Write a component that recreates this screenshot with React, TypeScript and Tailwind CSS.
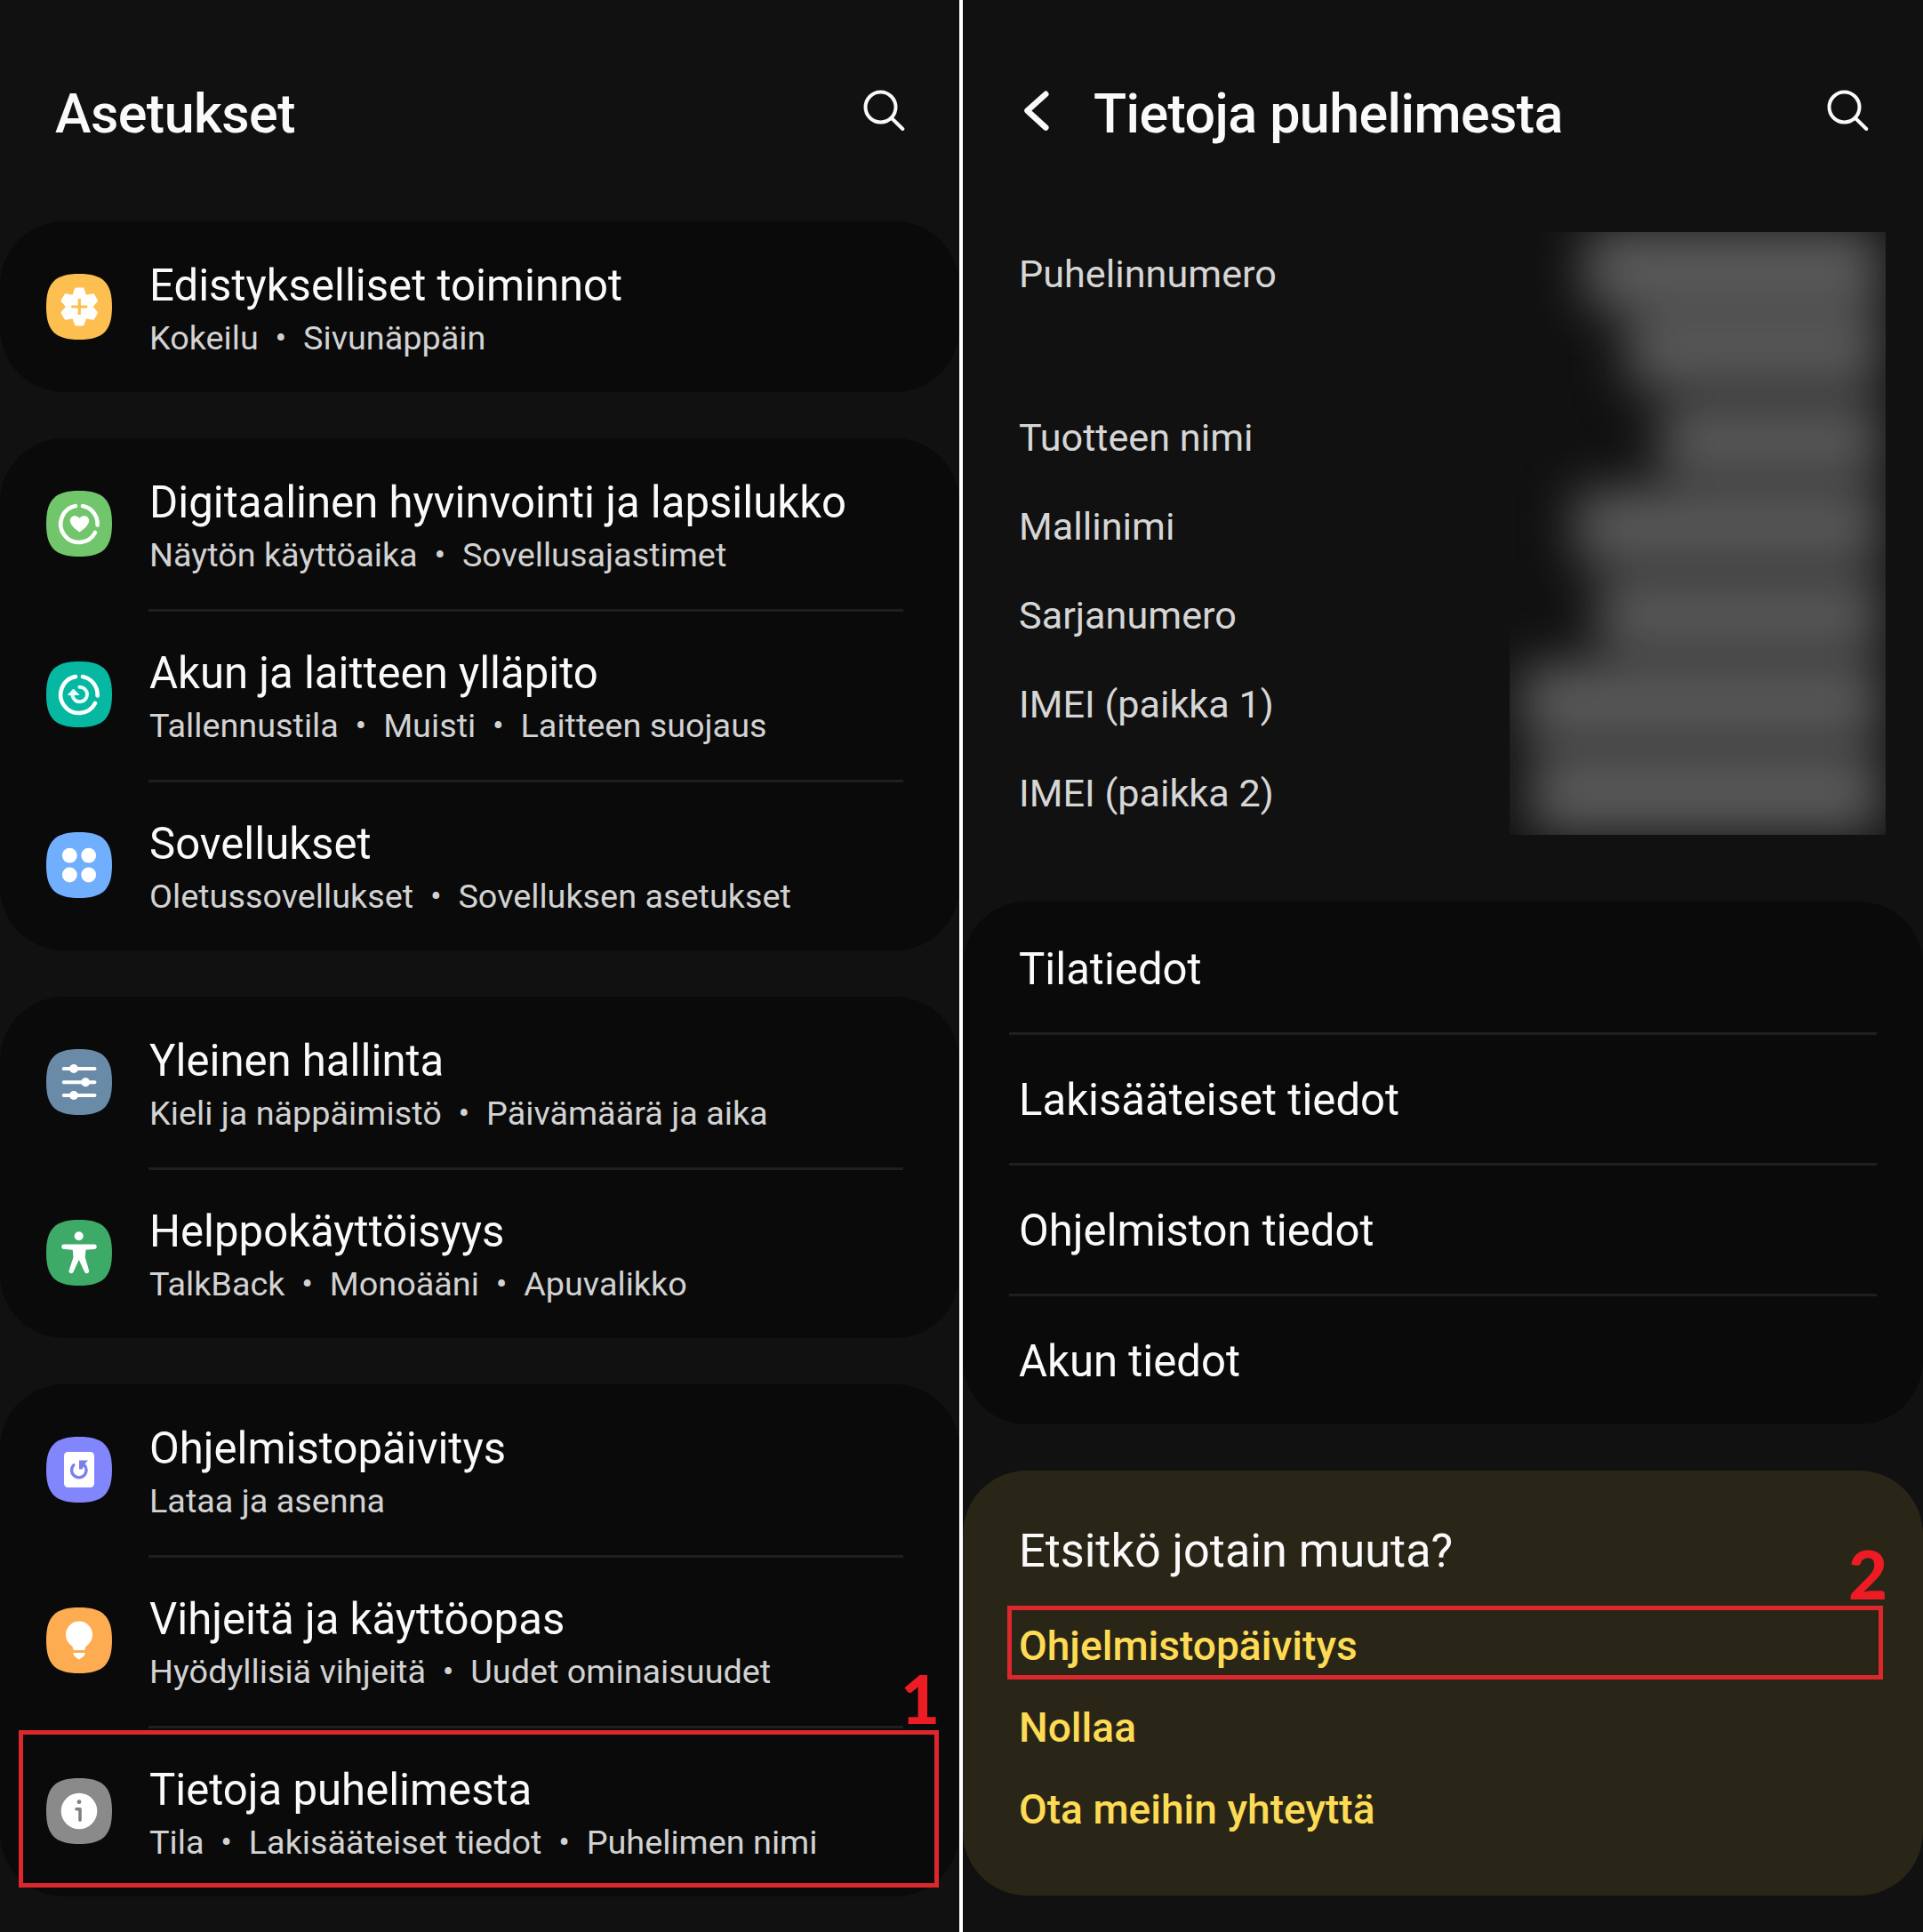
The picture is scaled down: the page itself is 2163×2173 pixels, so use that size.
import type { ReactNode } from 'react';

type Row = { title: string; parts: string[]; color: string; icon: ReactNode };

const gear = (
  <g>
    <g fill="#fff" stroke="#fff" strokeWidth="3" strokeLinejoin="round">
      <circle cx="37.300" cy="37" r="13.500" />
      {[0, 60, 120, 180, 240, 300].map((angle) => (
        <path key={angle} d="M30 27L33.500 17H41.100L44.600 27z" transform={`rotate(${angle} 37.300 37)`} />
      ))}
    </g>
    <path d="M37.300 28v18M28.300 37h18" stroke="#fdbf50" strokeWidth="3.200" />
  </g>
);

const brokenRing = (
  <path
    d="M33 17.100A20.600 20.600 0 1 0 55 47M41 17.100A20.600 20.600 0 0 1 57.600 38.500"
    fill="none"
    stroke="#fff"
    strokeWidth="4.600"
    strokeLinecap="round"
  />
);

const heart = (
  <g>
    {brokenRing}
    <path
      d="M37.500 46.500C34 44 26.800 39 26.800 33.500c0-5.500 7.200-7.300 10.700-2.700 3.500-4.600 10.700-2.800 10.700 2.700 0 5.500-7.200 10.500-10.700 13z"
      fill="#fff"
    />
  </g>
);

const care = (
  <g>
    {brokenRing}
    <path
      d="M37.500 28.700a8.300 8.300 0 1 1-8 9.500"
      fill="none"
      stroke="#e8fffa"
      strokeWidth="4"
      strokeLinecap="round"
    />
    <path d="M24.500 37.500l6-6.500 6.500 6.500z" fill="#e8fffa" stroke="#e8fffa" strokeLinejoin="round" />
  </g>
);

const apps = (
  <g fill="#fff">
    <circle cx="26.300" cy="26.200" r="8.400" />
    <circle cx="47.700" cy="26.200" r="8.400" />
    <circle cx="26.300" cy="48" r="8.400" />
    <circle cx="47.700" cy="48" r="8.400" />
  </g>
);

const sliders = (
  <g fill="#fff" stroke="#fff" strokeWidth="4" strokeLinecap="round">
    <path d="M19.700 22h34.800M19.700 37.200h34.800M19.700 52h34.800" />
    <g stroke="none">
      <circle cx="31" cy="22" r="5" />
      <circle cx="44.200" cy="37.200" r="5" />
      <circle cx="31" cy="52" r="5" />
    </g>
  </g>
);

const person = (
  <g fill="#fff">
    <circle cx="36.700" cy="18.300" r="5" />
    <path d="M20 27.500h34a2.700 2.700 0 0 1 0 5.400l-9.500.8-.8 8.300 4.300 14.700a2.600 2.600 0 0 1-4.900 1.800L36.800 45l-6.200 13.500a2.600 2.600 0 0 1-4.900-1.800L30.500 42l-.8-8.300-9.700-.8a2.700 2.700 0 0 1 0-5.400z" />
  </g>
);

const update = (
  <g>
    <rect x="20" y="17" width="34" height="40" rx="4.500" fill="#fff" />
    <path
      d="M30.800 31.800A8.300 8.300 0 1 0 42.500 31.500"
      fill="none"
      stroke="#7b80e8"
      strokeWidth="3.400"
      strokeLinecap="round"
    />
    <path d="M37 26.500h10l-3.500 4-3 6H37z" fill="#7b80e8" />
  </g>
);

const bulb = (
  <g fill="#fff">
    <path d="M37 15.500a15 15 0 0 0-15 15c0 6.500 3.500 10 6.500 12.500 2 1.800 1.800 3 2.100 5h12.800c.3-2 .1-3.200 2.100-5 3-2.500 6.500-6 6.500-12.500a15 15 0 0 0-15-15z" />
    <path d="M30.400 51h13.200c.3 4-3.600 4.800-6.600 7.800-3-3-6.900-3.800-6.600-7.800z" />
  </g>
);

const info = (
  <g>
    <circle cx="37" cy="37" r="20.300" fill="#fff" />
    <circle cx="37" cy="26.700" r="2.400" fill="#808080" />
    <path
      d="M34 34.800h4v12.500"
      fill="none"
      stroke="#808080"
      strokeWidth="3.600"
      strokeLinecap="round"
      strokeLinejoin="round"
    />
  </g>
);

const groups: Row[][] = [
  [{ title: 'Edistykselliset toiminnot', parts: ['Kokeilu', 'Sivunäppäin'], color: '#fdbf50', icon: gear }],
  [
    { title: 'Digitaalinen hyvinvointi ja lapsilukko', parts: ['Näytön käyttöaika', 'Sovellusajastimet'], color: '#71c66b', icon: heart },
    { title: 'Akun ja laitteen ylläpito', parts: ['Tallennustila', 'Muisti', 'Laitteen suojaus'], color: '#06b8a2', icon: care },
    { title: 'Sovellukset', parts: ['Oletussovellukset', 'Sovelluksen asetukset'], color: '#70affd', icon: apps },
  ],
  [
    { title: 'Yleinen hallinta', parts: ['Kieli ja näppäimistö', 'Päivämäärä ja aika'], color: '#698ba8', icon: sliders },
    { title: 'Helppokäyttöisyys', parts: ['TalkBack', 'Monoääni', 'Apuvalikko'], color: '#3eaa67', icon: person },
  ],
  [
    { title: 'Ohjelmistopäivitys', parts: ['Lataa ja asenna'], color: '#8286fc', icon: update },
    { title: 'Vihjeitä ja käyttöopas', parts: ['Hyödyllisiä vihjeitä', 'Uudet ominaisuudet'], color: '#feac51', icon: bulb },
    { title: 'Tietoja puhelimesta', parts: ['Tila', 'Lakisääteiset tiedot', 'Puhelimen nimi'], color: '#8a8a8a', icon: info },
  ],
];

const details = ['Tuotteen nimi', 'Mallinimi', 'Sarjanumero', 'IMEI (paikka 1)', 'IMEI (paikka 2)'];
const links = ['Tilatiedot', 'Lakisääteiset tiedot', 'Ohjelmiston tiedot', 'Akun tiedot'];

function SearchIcon() {
  return (
    <svg className="size-[50px] shrink-0" viewBox="0 0 50 50" fill="none" stroke="#fafafa" strokeWidth="4" strokeLinecap="round">
      <circle cx="20.500" cy="20.500" r="17" />
      <path d="M33 33L45.300 45" />
    </svg>
  );
}

function SettingsRow({ row, divided }: { row: Row; divided: boolean }) {
  return (
    <div className="flex h-[192px] pl-[52px] pr-[63px]">
      <svg className="mt-[59px] size-[74px] shrink-0" viewBox="0 0 74 74">
        <path d="M0 37C0 10 10 0 37 0S74 10 74 37 64 74 37 74 0 64 0 37z" fill={row.color} />
        {row.icon}
      </svg>
      <div className={`ml-[41px] flex-1 border-t-[3px] ${divided ? 'border-[#1f1f1f]' : 'border-transparent'}`}>
        <div className="mt-[41px] ml-px h-[56px] whitespace-nowrap text-[49.100px] leading-[56px] text-[#fafafa]">{row.title}</div>
        <div className="ml-px mt-[9px] flex whitespace-nowrap text-[37.800px] leading-[44px] text-[#d2d2d2]">
          {row.parts.map((part, i) => (
            <span key={part} className="whitespace-pre">
              {i > 0 ? '  •  ' : ''}
              {part}
            </span>
          ))}
        </div>
      </div>
    </div>
  );
}

const smudges = [
  'top-[-4px] left-[85px] h-[90px]',
  'top-[94px] left-[132px] h-[80px]',
  'top-[194px] left-[170px] h-[80px]',
  'top-[290px] left-[74px] h-[82px]',
  'top-[390px] left-[100px] h-[80px]',
  'top-[486px] left-[14px] h-[84px]',
  'top-[586px] left-[24px] h-[90px]',
];

export default function App() {
  return (
    <div className="flex h-[2173px] w-[2163px] overflow-hidden bg-[#111111] font-['Roboto',sans-serif]">
      <section className="relative w-[1079px] shrink-0">
        <header className="flex h-[249px] items-start justify-between pl-[62px] pr-[59px]">
          <h1 className="mt-[92px] text-[61px] leading-[72px] font-medium tracking-[-0.55px] text-[#fafafa]">Asetukset</h1>
          <div className="mt-[100px]">
            <SearchIcon />
          </div>
        </header>
        <div className="flex flex-col gap-[52px]">
          {groups.map((rows) => (
            <div key={rows[0].title} className="rounded-[72px] bg-[#0a0a0a]">
              {rows.map((row, i) => (
                <SettingsRow key={row.title} row={row} divided={i > 0} />
              ))}
            </div>
          ))}
        </div>
        <div className="absolute top-[1946px] left-[21px] h-[177px] w-[1035px] border-[5px] border-[#dc272d]" />
        <div className="absolute top-[1863px] left-[1013px] font-['Lato',sans-serif] text-[76px] leading-[94px] font-black text-[#ed1c24]">1</div>
      </section>

      <div className="w-[4px] shrink-0 bg-white" />

      <section className="relative w-[1080px] shrink-0">
        <header className="flex h-[260px] items-start pl-[66px] pr-[59px]">
          <svg
            className="mt-[100px] h-[50px] w-[36px]"
            viewBox="0 0 36 50"
            fill="none"
            stroke="#fafafa"
            strokeWidth="6.500"
            strokeLinecap="round"
            strokeLinejoin="round"
          >
            <path d="M27.300 5.800L6.500 24.500L27.300 43.500" />
          </svg>
          <h1 className="ml-[45px] mt-[92px] flex-1 text-[61px] leading-[72px] font-medium tracking-[-0.6px] text-[#fafafa]">
            Tietoja puhelimesta
          </h1>
          <div className="mt-[100px]">
            <SearchIcon />
          </div>
        </header>
        <div className="flex h-[754px] justify-between pl-[63px] pr-[42px] text-[43.2px] leading-[100px] text-[#d6d6d6]">
          <div>
            <div className="-mt-px h-[184px]">Puhelinnumero</div>
            {details.map((label) => (
              <div key={label} className="h-[100px]">
                {label}
              </div>
            ))}
          </div>
          <div className="mt-px h-[678px] w-[423px] overflow-hidden">
            <div className="relative h-full w-full blur-[28px]">
              {smudges.map((place) => (
                <div key={place} className={`absolute right-[6px] bg-[#5b5b5b] ${place}`} />
              ))}
            </div>
          </div>
        </div>
        <div className="h-[588px] rounded-[72px] bg-[#0a0a0a] pl-[52px] pr-[52px]">
          {links.map((label, i) => (
            <div
              key={label}
              className={`h-[147px] border-t-[3px] pl-[11px] text-[49.100px] leading-[146px] text-[#fafafa] ${i > 0 ? 'border-[#1f1f1f]' : 'border-transparent'}`}
            >
              {label}
            </div>
          ))}
        </div>
        <div className="mt-[52px] h-[478px] rounded-[72px] bg-[#2a2617] pl-[63px]">
          <div className="pt-[61px] text-[52.2px] leading-[60px] text-[#fafafa]">Etsitkö jotain muuta?</div>
          <div className="mt-[30px] text-[46.100px] leading-[92px] font-medium text-[#fedb55]">
            <div>Ohjelmistopäivitys</div>
            <div>Nollaa</div>
            <div>Ota meihin yhteyttä</div>
          </div>
        </div>
        <div className="absolute top-[1806px] left-[50px] h-[83px] w-[985px] border-[5px] border-[#dc272d]" />
        <div className="absolute top-[1723px] left-[996px] font-['Lato',sans-serif] text-[76px] leading-[94px] font-black text-[#ed1c24]">2</div>
      </section>
    </div>
  );
}
